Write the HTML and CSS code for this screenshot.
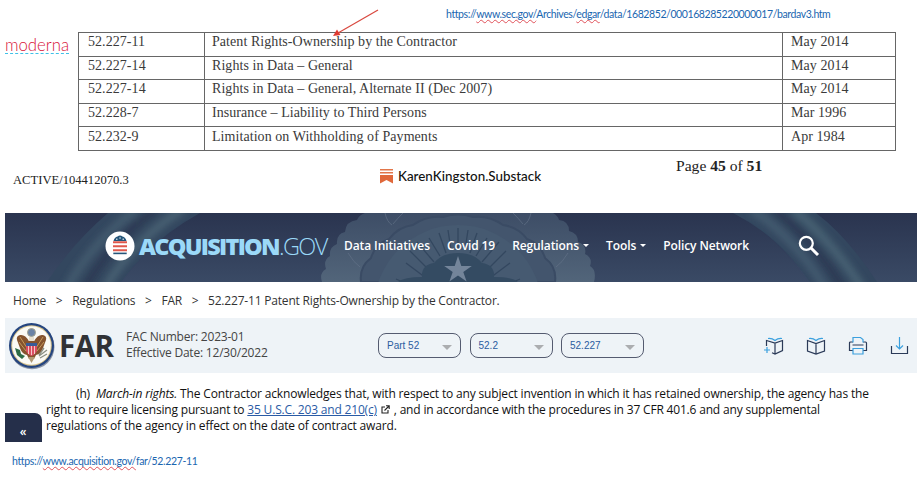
FILE: index.html
```
<!DOCTYPE html>
<html lang="en">
<head>
    <meta charset="UTF-8">
    <meta name="viewport" content="width=device-width, initial-scale=1.0">
    <title>52.227-11 Patent Rights-Ownership by the Contractor</title>
    <link rel="stylesheet" href="styles.css">
</head>
<body>
    <main class="page">
    <div class="source">
        <span class="url">https://<span class="wavy">www.sec.gov/</span>Archives/<span class="wavy">edgar</span>/data/1682852/000168285220000017/bardav3.htm</span>
    </div>
    <svg class="arrow" width="50" height="32" viewBox="0 0 50 32">
        <path d="M47 2 L7 25" stroke="#d9483f" stroke-width="1.200" fill="none"/>
        <path d="M2 28 L6 21.500 L9.500 27 Z" fill="#e03a30"/>
    </svg>

    <section class="contract">
        <div class="moderna"><span>moderna</span></div>
        <table class="clauses">
            <tr><td>52.227-11</td><td>Patent Rights-Ownership by the Contractor</td><td>May 2014</td></tr>
            <tr><td>52.227-14</td><td>Rights in Data – General</td><td>May 2014</td></tr>
            <tr><td>52.227-14</td><td>Rights in Data – General, Alternate II (Dec 2007)</td><td>May 2014</td></tr>
            <tr><td>52.228-7</td><td>Insurance – Liability to Third Persons</td><td>Mar 1996</td></tr>
            <tr><td>52.232-9</td><td>Limitation on Withholding of Payments</td><td>Apr 1984</td></tr>
        </table>
    </section>

    <section class="contract-foot">
        <span class="active">ACTIVE/104412070.3</span>
        <div class="substack">
            <svg width="13" height="15" viewBox="0 0 13 15">
                <path d="M0 0.800h13M0 3.800h13" stroke="#e2764a" stroke-width="1.500"/>
                <path d="M0 6h13v8.500l-6.500-3.600L0 14.500z" fill="#e0683a"/>
            </svg>
            <span>KarenKingston.Substack</span>
        </div>
        <span class="pageno">Page <b>45</b> of <b>51</b></span>
    </section>

    <header class="banner">
        <svg class="banner-art" width="912" height="69" viewBox="0 0 912 69">
            <defs>
                <linearGradient id="seal" x1="0" y1="0" x2="0" y2="1">
                    <stop offset="0" stop-color="#3d4d66"/>
                    <stop offset="1" stop-color="#52657a"/>
                </linearGradient>
                <filter id="soft" x="-20%" y="-20%" width="140%" height="140%">
                    <feGaussianBlur stdDeviation="3"/>
                </filter>
            </defs>
            <!-- ribbons on both sides -->
            <path d="M103 0Q68 30 42 69H116Q146 27 195 0Z" fill="#33475f"/>
            <g filter="url(#soft)" fill="none">
                <path d="M132 -4Q88 28 62 75" stroke="#4a6274" stroke-width="9" opacity=".65"/>
                <path d="M178 -4Q128 28 100 75" stroke="#4f6a7a" stroke-width="9" opacity=".65"/>
                <path d="M152 -4Q108 26 80 75" stroke="#293a52" stroke-width="8" opacity=".8"/>
            </g>
            <path d="M728 0Q775 24 805 69H872Q842 23 811 0Z" fill="#33475f"/>
            <g filter="url(#soft)" fill="none">
                <path d="M746 -4Q790 25 820 75" stroke="#4a6376" stroke-width="9" opacity=".65"/>
                <path d="M788 -4Q824 25 857 75" stroke="#4f6b7b" stroke-width="9" opacity=".65"/>
                <path d="M768 -4Q807 25 838 75" stroke="#293a52" stroke-width="8" opacity=".8"/>
            </g>
            <!-- seal behind the menu -->
            <path d="M317 69q-3-9 4-13q-3-9 4-13q-1-9 7-12q-1-10 8-12q1-11 12-12q2-5 8-7H548q5 3 6 7q10 1 10 11q9 2 9 11q9 3 7 12q8 4 5 12q7 4 4 16z" fill="url(#seal)"/>
            <path d="M343 40q6 10 12 14M380 0q2 9 7 12M398 0q-6 6-10 11M526 0q-2 9-7 12M508 0q6 6 10 11M563 40q-6 10-12 14" stroke="#65748a" stroke-width="1" fill="none" opacity=".6"/>
            <path d="M356 69q-2-15 10-24q4-14 18-19q9-12 24-14q14-10 30-8q15-5 30 0q16-2 30 8q15 2 24 14q14 5 18 19q12 9 10 24z" fill="#43556d" stroke="#3a4b64" stroke-width="2"/>
            <circle cx="453" cy="96" r="84" fill="#465a71"/>
            <path d="M391 66l11 5M401 50l20 15M405 38l20 20M412 29l17 20M424 25l11 18M434 20l7 20M443 17l3 20M453 15v21M463 17l-3 20M472 20l-7 20M482 25l-11 18M494 29l-17 20M501 38l-20 20M505 50l-20 15M515 66l-11 5" stroke="#33475f" stroke-width="1.300"/>
            <path d="M393 69q6-5 24-5q-1-12 12-14q8-10 24-10q16 0 24 10q13 2 12 14q18 0 24 5z" fill="#344b62"/>
            <path d="M453 43l3.300 10h10.500l-8.500 6 3.300 9.500-8.600-6-8.600 6 3.300-9.500-8.500-6h10.500z" fill="#74859a"/>
        </svg>
        <svg class="flag" width="30" height="30" viewBox="0 0 30 30">
            <circle cx="15" cy="15" r="14.500" fill="#fff"/>
            <path d="M8.500 10q1-4 4-4.500q2.500-2 5 0q3 .5 4 4.500z" fill="#245579"/>
            <path d="M11 8.200h1.500M14.300 7h1.500M17.500 8.200h1.500" stroke="#fff" stroke-width="1"/>
            <path d="M8 11.200h14M8 15.200h14M8 19.200h14" stroke="#df584c" stroke-width="2"/>
            <path d="M8.300 21.600h13.400v1.600H8.300z" fill="#245579"/>
        </svg>
        <div class="brand"><b>ACQUISITION</b><span>.GOV</span></div>
        <nav class="menu">
            <a>Data Initiatives</a>
            <a>Covid 19</a>
            <a class="drop">Regulations</a>
            <a class="drop">Tools</a>
            <a>Policy Network</a>
        </nav>
        <svg class="search" width="22" height="22" viewBox="0 0 22 22">
            <circle cx="8.300" cy="8.300" r="6.500" fill="none" stroke="#fff" stroke-width="2.200"/>
            <path d="M13 13l7 7" stroke="#fff" stroke-width="3"/>
        </svg>
    </header>

    <div class="crumbs">
        <span>Home</span><i>&gt;</i><span>Regulations</span><i>&gt;</i><span>FAR</span><i>&gt;</i><span>52.227-11 Patent Rights-Ownership by the Contractor.</span>
    </div>

    <section class="farbar">
        <svg class="eagle" width="48" height="48" viewBox="0 0 48 48">
            <circle cx="24" cy="24.800" r="22.500" fill="#8b94a5"/>
            <circle cx="23.500" cy="23.500" r="22.500" fill="#25457f"/>
            <circle cx="23.500" cy="23.500" r="20.300" fill="#d9c48b"/>
            <circle cx="23.500" cy="23.500" r="19.300" fill="#fbfaf5"/>
            <circle cx="23.500" cy="10.500" r="4" fill="#6c83a5" stroke="#a3a28d"/>
            <path d="M21 19q-4-7-9-6q-4 1-3 5l3 8q2 6 7 7l2 4h5l2-4q5-1 7-7l3-8q1-4-3-5q-5-1-9 6l-1-4h-3z" fill="#85532e"/>
            <path d="M12 15l7 11M11 20l7 9M35 15l-7 11M36 20l-7 9" stroke="#c49a5b" stroke-width="1"/>
            <path d="M21.500 15h4l1 4h-6z" fill="#e9e2d0"/>
            <path d="M18 21h11v3H18z" fill="#385b99"/>
            <path d="M18 24h11v5q-2 4-5.500 5q-3.500-1-5.500-5z" fill="#d94e61"/>
            <path d="M20.500 24v8M23.500 24v9M26.500 24v8" stroke="#f5c5c8" stroke-width="1"/>
            <path d="M20 35l3.500 6 3.500-6z" fill="#b29a74"/>
            <path d="M7 26l5 2 1 4 4 2-3 3-5-4z" fill="#2f6b46"/>
            <path d="M31 34l8-6M32 36l7-4M31 33l5-7" stroke="#8b8f83" stroke-width="1.300"/>
        </svg>
        <h1>FAR</h1>
        <div class="fac">FAC Number: 2023-01<br>Effective Date: 12/30/2022</div>
        <div class="picks">
            <div class="pick">Part 52</div>
            <div class="pick">52.2</div>
            <div class="pick">52.227</div>
        </div>
        <div class="tools">
            <svg width="20" height="20" viewBox="0 0 20 20">
                <path d="M2.500 10V4.500L11 7l7.500-2.500v10L11 18l-3-1.200M11 7v11" class="dark"/>
                <path d="M4 2.500q4-.5 7 2q3-2.500 7-2M0 14h6M3 11v6" class="light"/>
            </svg>
            <svg width="20" height="20" viewBox="0 0 20 20">
                <path d="M1.500 4.500L10 7.500l8.500-3v10.500L10 18l-8.500-3zM10 7.500V18" class="dark"/>
                <path d="M3 2.500q4-.5 7 2q3-2.500 7-2" class="light"/>
            </svg>
            <svg width="20" height="20" viewBox="0 0 20 20">
                <path d="M5 6H2.500Q1.500 6 1.500 7v7.500H5M15 6h2.500q1 0 1 1v7.500H15M4.500 9h11" class="dark"/>
                <path d="M5 6.500v-5h7.500l2.500 2v3M5 12.500h10V18H5z" class="light"/>
            </svg>
            <svg width="20" height="20" viewBox="0 0 20 20">
                <path d="M1.500 10v7.500h16V10" class="dark"/>
                <path d="M9.500 1v12M6 9.500l3.500 3.500L13 9.500" class="light"/>
            </svg>
        </div>
    </section>

    <section class="clause">
        <div class="collapse">«</div>
        <p>
            <span class="line first">(h)&nbsp; <em>March-in rights.</em> The Contractor acknowledges that, with respect to any subject invention in which it has retained ownership, the agency has the</span>
            <span class="line second">right to require licensing pursuant to <a>35 U.S.C. 203 and 210(c)</a>
                <svg class="ext" width="9" height="9" viewBox="0 0 9 9"><path d="M4 2H1v6h6V5M3.500 5.500L8 1M5 .8h3.200V4" fill="none" stroke="#222" stroke-width="1.100"/></svg>
                , and in accordance with the procedures in 37 CFR 401.6 and any supplemental</span>
            <span class="line">regulations of the agency in effect on the date of contract award.</span>
        </p>
    </section>

    <div class="source-bottom">
        <span class="url">https://<span class="wavy">www.acquisition.gov/</span>far/52.227-11</span>
    </div>
    </main>
</body>
</html>
```
FILE: styles.css
```
body{
    margin: 0;
    background: #fff;
    overflow: hidden;
}
.page{
    position: relative;
    width: 917px;
    height: 482px;
    display: flex;
    flex-direction: column;
    font-family: "Open Sans", sans-serif;
    color: #111;
}
.page > *{
    flex-shrink: 0;
    box-sizing: border-box;
}
.source{
    height: 31px;
    padding: 7px 0 0 446px;
}
.url{
    display: block;
    font: 10.5px/15px Lato, sans-serif;
    letter-spacing: -0.41px;
    color: #1a66b0;
    white-space: nowrap;
}
.wavy{
    text-decoration: underline wavy #e0525a 0.7px;
    text-underline-offset: 1px;
    text-decoration-skip-ink: none;
}
.arrow{
    position: absolute;
    left: 331px;
    top: 8px;
}
.contract{
    height: 120px;
    display: flex;
}
.moderna{
    width: 78px;
    box-sizing: border-box;
    padding: 5px 0 0 5px;
}
.moderna span{
    display: block;
    width: 64px;
    height: 17px;
    border-bottom: 1px dashed #3fc0e8;
    font: 300 16.8px/17px Lato, sans-serif;
    color: #d8143a;
}
.clauses{
    width: 818px;
    height: 119px;
    margin-top: 1px;
    table-layout: fixed;
    border-collapse: collapse;
    font: 14px/15px "Liberation Serif", serif;
    letter-spacing: 0.06px;
    color: #3a3a3a;
}
.clauses td{
    border: 1px solid #666;
    padding: 0 0 5px 8px;
    white-space: nowrap;
}
.clauses td:nth-child(1){
    width: 116px;
    padding-left: 9px;
}
.clauses td:nth-child(2){
    padding-left: 7px;
}
.clauses td:nth-child(3){
    width: 104px;
}
.contract-foot{
    height: 62px;
    display: flex;
    align-items: flex-start;
    padding-left: 13px;
    white-space: nowrap;
}
.active{
    width: 367px;
    padding-top: 21px;
    font: 12.6px/16px "Liberation Serif", serif;
    color: #222;
}
.substack{
    width: 296px;
    padding-top: 16px;
    display: flex;
    align-items: center;
    gap: 5px;
    font: 500 13.4px/18px Lato, sans-serif;
}
.pageno{
    padding-top: 6px;
    font: 15.6px/17px "Liberation Serif", serif;
    color: #222;
}
.banner{
    position: relative;
    height: 69px;
    margin-left: 5px;
    padding-left: 100px;
    display: flex;
    align-items: center;
    background: linear-gradient(#2a344f, #3a4a65);
    overflow: hidden;
    white-space: nowrap;
}
.banner-art{
    position: absolute;
    left: 0;
    top: 0;
}
.flag, .brand, .menu, .search{
    position: relative;
    top: -2px;
}
.brand{
    width: 205px;
    margin-left: 4px;
    font-size: 23.5px;
    line-height: 30px;
    color: #9bd9f8;
}
.brand b{
    font-weight: 800;
    letter-spacing: -1.75px;
}
.brand span{
    font-weight: 300;
    letter-spacing: -1.6px;
}
.menu{
    display: flex;
    width: 454px;
    font-size: 12px;
    font-weight: 600;
    letter-spacing: -0.1px;
    color: #fff;
}
.menu a{
    margin-right: 17px;
}
.drop::after{
    content: "";
    display: inline-block;
    margin-left: 4px;
    vertical-align: 3px;
    border: 3px solid transparent;
    border-top-color: #fff;
    border-bottom: 0;
}
.crumbs{
    height: 36px;
    padding-left: 13px;
    display: flex;
    font-size: 12px;
    line-height: 37px;
    letter-spacing: -0.19px;
    white-space: nowrap;
    color: #333;
}
.crumbs i{
    font-style: normal;
    width: 26px;
    text-align: center;
}
.farbar{
    height: 55px;
    margin-left: 5px;
    padding-left: 3px;
    display: flex;
    align-items: center;
    background: #eef3f7;
    white-space: nowrap;
}
.farbar h1{
    box-sizing: border-box;
    margin: 0;
    width: 70px;
    padding-left: 3px;
    font-size: 29.5px;
    line-height: 36px;
    color: #303236;
    letter-spacing: -0.5px;
}
.fac{
    width: 252px;
    margin-top: -2px;
    font-size: 12px;
    line-height: 16px;
    letter-spacing: -0.2px;
    color: #444;
}
.picks{
    display: flex;
    gap: 8.5px;
    width: 386px;
}
.pick{
    box-sizing: border-box;
    width: 83px;
    height: 25px;
    padding: 0 8px;
    display: flex;
    align-items: center;
    justify-content: space-between;
    border: 1px solid #545b70;
    border-radius: 8px;
    font: 10px/23px "Liberation Sans", sans-serif;
    color: #2b5ca0;
}
.pick::after{
    content: "";
    border: 5px solid transparent;
    border-top-color: #abadb0;
    border-bottom: 0;
    margin-top: 4px;
}
.tools{
    display: flex;
    gap: 22px;
}
.tools svg{
    fill: none;
    stroke-width: 1.2;
    overflow: visible;
}
.dark{
    stroke: #2b3a58;
}
.light{
    stroke: #3ba0de;
}
.clause{
    height: 69px;
    margin-left: 5px;
    display: flex;
}
.collapse{
    width: 37px;
    height: 29px;
    margin-top: 40px;
    border-radius: 0 7px 0 0;
    background: #252f4a;
    color: #fff;
    font-size: 12px;
    font-weight: 600;
    line-height: 37px;
    text-align: center;
    text-indent: -1px;
}
.clause p{
    margin: 13px 0 0 4px;
    font-size: 12px;
    line-height: 16px;
    letter-spacing: -0.16px;
    color: #111;
}
.line{
    display: block;
    white-space: nowrap;
}
.first{
    padding-left: 30px;
}
.second{
    letter-spacing: -0.18px;
}
.line a{
    color: #2a5ba5;
    text-decoration: underline;
}
.ext{
    margin: 0 1px;
}
.source-bottom{
    padding: 12px 0 0 12px;
}
.source-bottom .url{
    letter-spacing: -0.34px;
}
```
